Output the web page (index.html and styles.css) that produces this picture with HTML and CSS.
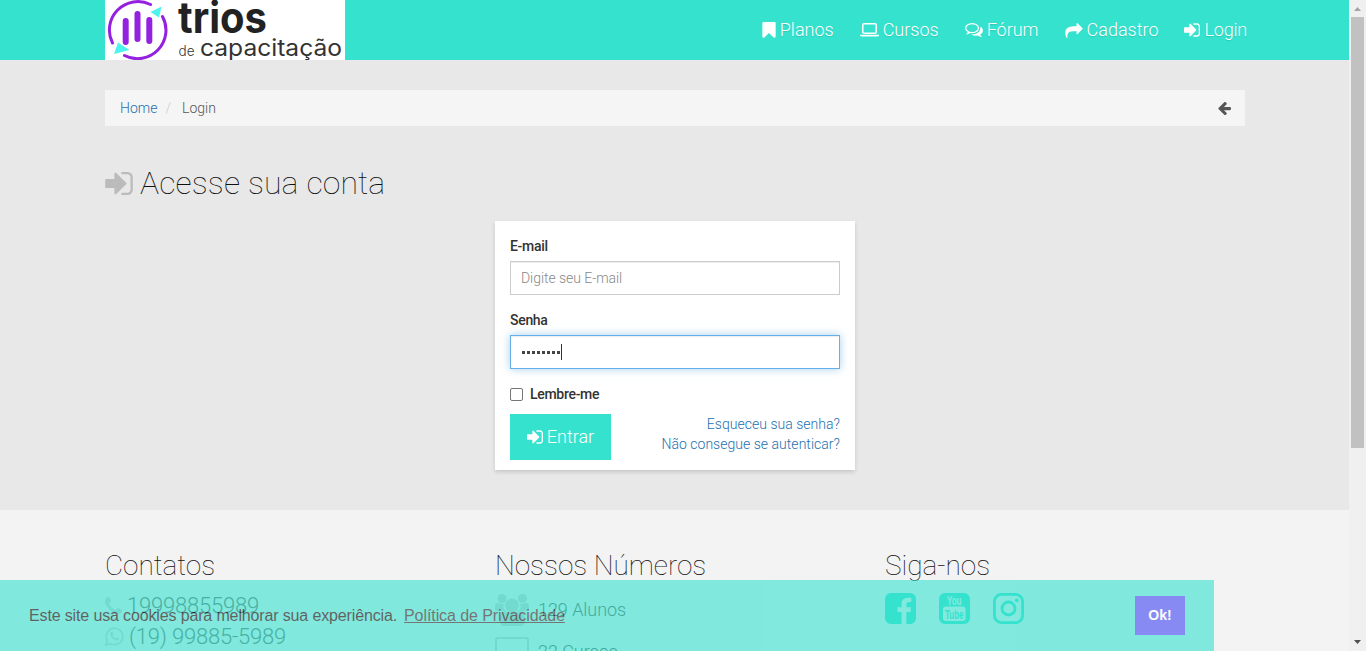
FILE: index.html
```html
<!DOCTYPE html>
<html lang="pt-BR">
<head>
<meta charset="utf-8">
<title>Login</title>
<link rel="stylesheet" href="styles.css">
</head>
<body>
<svg width="0" height="0" class="sprite">
  <symbol id="sign-in" viewBox="128 256 1536 1280"><path d="M1312 896q0 26-19 45l-544 544q-19 19-45 19t-45-19-19-45v-288h-448q-26 0-45-19t-19-45v-384q0-26 19-45t45-19h448v-288q0-26 19-45t45-19 45 19l544 544q19 19 19 45zm352-352v704q0 119-84.500 203.500t-203.500 84.500h-320q-13 0-22.500-9.500t-9.500-22.500q0-4-1-20t-.5-26.500 3-23.500 10-19.500 20.500-6.500h320q66 0 113-47t47-113v-704q0-66-47-113t-113-47h-312l-11.500-1-11.500-3-8-5.500-7-9-2-13.500q0-4-1-20t-.5-26.500 3-23.500 10-19.500 20.500-6.500h320q119 0 203.500 84.500t84.500 203.500z"/></symbol>
</svg>
<div class="window">
  <div class="page">
    <header class="topbar">
      <div class="container topbar-row">
        <svg class="logo" width="240" height="60" viewBox="0 0 240 60">
          <rect width="240" height="60" fill="#fff"/>
          <g fill="none" stroke="#9420e0" stroke-width="3" stroke-linecap="round">
            <path d="M7.500 43A28.500 28.500 0 0 1 45.500 4.500"/>
            <path d="M57.500 16.500A28.500 28.500 0 0 1 19.500 55.500"/>
          </g>
          <g stroke="#9420e0" stroke-width="6" stroke-linecap="round"><path d="M20.700 21V42M32.500 14V39M44.300 20V41"/></g>
          <path fill="#4df3ec" d="M45.500 12L56.500 6.500L54 17.500ZM13 42.500L24.500 50L9 54Z"/>
          <text class="logo-name" x="73" y="33" textLength="89" lengthAdjust="spacingAndGlyphs">trios</text>
          <text class="logo-de" x="73.500" y="55.500" textLength="16" lengthAdjust="spacingAndGlyphs">de</text>
          <text class="logo-sub" x="95" y="55.500" textLength="142" lengthAdjust="spacingAndGlyphs">capacitação</text>
        </svg>
        <nav class="nav">
          <a><svg width="14" height="16" viewBox="256 128 1280 1536"><path d="M1420 128q23 0 44 9 33 13 52.500 41t19.500 62v1289q0 34-19.500 62t-52.500 41q-19 8-44 8-48 0-83-32l-441-424-441 424q-36 33-83 33-23 0-44-9-33-13-52.500-41t-19.500-62v-1289q0-34 19.500-62t52.500-41q21-9 44-9h1048z"/></svg><span>Planos</span></a>
          <a><svg width="19" height="14" viewBox="0 0 19 14"><path fill-rule="evenodd" d="M4 0H15Q17 0 17 2V9Q17 11 15 11H4Q2 11 2 9V2Q2 0 4 0ZM3.500 1.500V9.500H15.500V1.500ZM0 11.700H19V12.500Q19 13.500 17 13.500H2Q0 13.500 0 12.500Z"/></svg><span>Cursos</span></a>
          <a><svg width="18" height="14" viewBox="0 256 1792 1408"><path d="M704 384q-153 0-286 52t-211.500 141-78.500 191q0 82 53 158t149 132l97 56-35 84q34-20 62-39l44-31 53 10q78 14 153 14 153 0 286-52t211.500-141 78.500-191-78.500-191-211.500-141-286-52zm0-128q191 0 353.500 68.500t256.500 186.500 94 257-94 257-256.500 186.500-353.500 68.500q-86 0-176-16-124 88-278 128-36 9-86 16h-3q-11 0-20.500-8t-11.500-21q-1-3-1-6.500t.5-6.500 2-6l2.500-5 3.500-5.500 4-5 4.500-5 4-4.500q5-6 23-25t26-29.500 22.500-29 25-38.500 20.500-44q-124-72-195-177t-71-224q0-139 94-257t256.500-186.500 353.500-68.500zm822 1169q10 24 20.500 44t25 38.500 22.500 29 26 29.500 23 25q1 1 4 4.500t4.500 5 4 5 3.500 5.500l2.500 5 2 6 .5 6.500-1 6.500q-3 14-13 22t-22 7q-50-7-86-16-154-40-278-128-90 16-176 16-271 0-472-132 58 4 88 4 161 0 309-45t264-129q125-92 192-212t67-254q0-77-23-152 129 71 204 178t75 230q0 120-71 224.500t-195 176.500z"/></svg><span>Fórum</span></a>
          <a><svg width="18" height="15" viewBox="0 64 1792 1536"><path d="M1792 640q0 26-19 45l-512 512q-19 19-45 19t-45-19-19-45v-256h-224q-98 0-175.500 6t-154 21.500-133 42.500-105.500 69.500-80 101-48.500 138.500-17.500 181q0 55 5 123 0 6 2.500 23.500t2.500 26.500q0 15-8.500 25t-23.500 10q-16 0-28-17-7-9-13-22t-13.500-30-10.500-24q-127-285-127-451 0-199 53-333 162-403 875-403h224v-256q0-26 19-45t45-19 45 19l512 512q19 19 19 45z"/></svg><span>Cadastro</span></a>
          <a><svg width="16" height="14"><use href="#sign-in"/></svg><span>Login</span></a>
        </nav>
      </div>
    </header>
    <main class="container main">
      <div class="breadcrumb">
        <div><a class="link">Home</a><span class="sep">/</span><span>Login</span></div>
        <svg width="13" height="13" viewBox="150 190 1514 1530"><path d="M1664 896v128q0 53-32.500 90.500t-84.500 37.500h-704l293 294q38 36 38 90t-38 90l-75 76q-37 37-90 37-52 0-91-37l-651-652q-37-37-37-90 0-52 37-91l651-650q38-38 91-38 52 0 90 38l75 74q38 38 38 91t-38 91l-293 293h704q52 0 84.500 37.500t32.500 90.500z"/></svg>
      </div>
      <h1><svg width="28" height="23"><use href="#sign-in"/></svg><span>Acesse sua conta</span></h1>
      <form class="card">
        <label class="lbl">E-mail</label>
        <div class="field placeholder">Digite seu E-mail</div>
        <label class="lbl second">Senha</label>
        <div class="field focus"><span class="dots"><i></i><i></i><i></i><i></i><i></i><i></i><i></i><i></i></span><span class="caret"></span></div>
        <div class="remember"><span class="box"></span><label class="lbl">Lembre-me</label></div>
        <div class="actions">
          <div class="enter"><svg width="16" height="14"><use href="#sign-in"/></svg><span>Entrar</span></div>
          <div class="help"><a class="link">Esqueceu sua senha?</a><a class="link">Não consegue se autenticar?</a></div>
        </div>
      </form>
    </main>
    <footer class="footer">
      <div class="container cols">
        <section>
          <h2>Contatos</h2>
          <div class="phone"><svg width="17" height="17" viewBox="192 128 1408 1408"><path d="M1600 1240q0 27-10 70.500t-21 68.500q-21 50-122 106-94 51-186 51-27 0-52.500-3.500t-57.500-12.500-47.500-14.500-55.500-20.500-49-18q-98-35-175-83-128-79-264.500-215.500t-215.500-264.500q-48-77-83-175-3-9-18-49t-20.500-55.500-14.500-47.500-12.500-57.500-3.500-52.500q0-92 51-186 56-101 106-122 25-11 68.500-21t70.500-10q14 0 21 3 18 6 53 76 11 19 30 54t35 63.500 31 53.500q3 4 17.500 25t21.500 35.500 7 28.500q0 20-28.500 50t-62 55-62 53-28.500 46q0 9 5 22.500t8.500 20.500 14 24 11.500 19q76 137 174 235t235 174q2 1 19 11.500t24 14 20.500 8.500 22.500 5q18 0 46-28.500t53-62 55-62 50-28.500q14 0 28.500 7t35.500 21.500 25 17.500q25 15 53.500 31t63.500 35 54 30q70 35 76 53 3 7 3 21z"/></svg><span>19998855989</span></div>
          <div class="phone"><svg width="19" height="19" viewBox="0 0 19 19"><path d="M1 18L2.300 13.300A8.200 8.200 0 1 1 5.700 16.700Z" fill="none" stroke="currentColor" stroke-width="1.700"/><path d="M6.500 5Q5 5.300 5 7Q6 12 12 13.700Q14 13.500 14 11.500L11.500 10.300L10.300 11.500Q8.500 10.800 7.600 9L8.300 7.800L7.500 5Z"/></svg><span>(19) 99885-5989</span></div>
        </section>
        <section>
          <h2>Nossos Números</h2>
          <div class="stat"><svg width="34" height="32" viewBox="0 0 34 32"><circle cx="7" cy="4.500" r="4.500"/><circle cx="27.500" cy="4.500" r="4.500"/><circle cx="17" cy="11.500" r="7"/><path d="M0 16V13Q0 9 3 9L9 10Q7 15 11 17H3Q0 17 0 16ZM34 16V13Q34 9 31 9L25 10Q27 15 23 17H31Q34 17 34 16ZM5 27Q5 17 10 17Q17 21 24 17Q30 17 30 27Q30 32 25 32H9Q5 32 5 27Z"/></svg><span>129 Alunos</span></div>
          <div class="stat"><svg width="34" height="30" viewBox="0 0 34 30"><rect x="1" y="1" width="32" height="24" rx="1" fill="none" stroke="currentColor" stroke-width="2"/><path d="M0 27H34V30H0Z"/></svg><span>22 Cursos</span></div>
        </section>
        <section>
          <h2>Siga-nos</h2>
          <div class="social">
            <svg width="31" height="31" viewBox="128 128 1536 1536"><path d="M1376 128q119 0 203.500 84.500t84.500 203.500v960q0 119-84.500 203.500t-203.500 84.500h-188v-595h199l30-232h-229v-148q0-56 23.500-84t91.500-28l122-1v-207q-63-9-178-9-136 0-217.500 80t-81.500 226v171h-200v232h200v595h-532q-119 0-203.500-84.500t-84.500-203.500v-960q0-119 84.500-203.500t203.500-84.500h960z"/></svg>
            <svg width="31" height="31" viewBox="0 0 31 31"><rect width="31" height="31" rx="6"/><rect x="4" y="13.500" width="22.500" height="14.500" rx="3" fill="#f3f3f3"/><text x="8" y="12" textLength="14.500" lengthAdjust="spacingAndGlyphs" class="yt yt-you">You</text><text x="6" y="25.500" textLength="18.500" lengthAdjust="spacingAndGlyphs" class="yt">Tube</text></svg>
            <svg width="31" height="31" viewBox="0 0 31 31"><rect x="1.400" y="1.400" width="28.200" height="28.200" rx="7" fill="none" stroke="#35e2ce" stroke-width="2.800"/><circle cx="15.500" cy="15.500" r="6.500" fill="none" stroke="#35e2ce" stroke-width="2.800"/><circle cx="23.700" cy="7.300" r="1.900"/></svg>
          </div>
        </section>
      </div>
    </footer>
    <div class="cookie">
      <div class="cookie-text"><span class="msg">Este site usa cookies para melhorar sua experiência.</span><a>Política de Privacidade</a></div>
      <div class="ok">Ok!</div>
    </div>
  </div>
  <div class="scrollbar">
    <svg width="17" height="17" viewBox="0 0 17 17"><path fill="#a3a3a3" d="M5 11L8.500 7L12 11Z"/></svg>
    <div class="thumb"></div>
    <svg class="down" width="17" height="17" viewBox="0 0 17 17"><path fill="#505050" d="M5 6L8.500 10L12 6Z"/></svg>
  </div>
</div>
</body>
</html>
```
FILE: styles.css
```css
* { box-sizing: border-box; }
body { margin: 0; font: 300 14px/20px Roboto, sans-serif; color: #333; background: #e8e8e8; }
svg { display: block; flex: none; fill: currentColor; }
.sprite { position: absolute; }
.window { display: flex; width: 1366px; height: 651px; overflow: hidden; }
.page { position: relative; width: 1349px; height: 651px; overflow: hidden; }
.container { width: 1140px; margin-left: 105px; }
.topbar { height: 60px; background: #35e2ce; }
.topbar-row { display: flex; justify-content: space-between; }
.logo-name { font: 700 43px Inter, sans-serif; fill: #222; }
.logo-de { font: 300 14px Inter, sans-serif; fill: #333; }
.logo-sub { font: 400 23.500px Inter, sans-serif; fill: #333; }
.nav { display: flex; gap: 26px; height: 60px; align-items: center; margin-right: -2px; color: #fff; font-size: 18px; }
.nav a { display: flex; align-items: center; gap: 4px; text-shadow: 0 1px 1px rgba(0,0,0,.12); }
.nav a:last-child { letter-spacing: -.2px; }
.link { color: #2470b0; }
.breadcrumb { display: flex; justify-content: space-between; align-items: center; height: 36px; margin-top: 30px; padding: 0 14px 0 15px; background: #f5f5f5; color: #555; }
.sep { color: #ccc; padding: 0 11px 0 8px; }
h1 { display: flex; align-items: center; gap: 7px; height: 40px; margin: 37px 0 0; font-size: 32px; font-weight: 100; letter-spacing: .12px; line-height: 40px; color: #111; }
h1 svg { color: #bbb; }
.card { width: 360px; height: 249px; margin: 18px 0 0 390px; padding: 15px; background: #fff; box-shadow: 0 2px 4px rgba(0,0,0,.15); }
.lbl { display: block; height: 20px; font-weight: 500; letter-spacing: -.3px; }
.second { margin-top: 15px; }
.field { display: flex; align-items: center; height: 34px; margin-top: 5px; padding: 0 10px; border: 1px solid #ccc; background: #fff; box-shadow: inset 0 1px 1px rgba(0,0,0,.075); }
.placeholder { color: #888; letter-spacing: -.05px; }
.focus { border-color: #66afe9; box-shadow: inset 0 1px 1px rgba(0,0,0,.075), 0 0 8px rgba(102,175,233,.6); }
.dots { display: flex; gap: 2px; padding-left: 1px; }
.dots i { width: 3px; height: 3px; background: #444; }
.caret { width: 1px; height: 16px; background: #333; margin-left: 1px; }
.remember { display: flex; gap: 7px; align-items: center; height: 20px; margin-top: 15px; }
.box { width: 13px; height: 13px; border: 1px solid #767676; border-radius: 2px; }
.actions { display: flex; justify-content: space-between; margin-top: 10px; }
.enter { display: flex; align-items: center; justify-content: center; gap: 4px; width: 101px; height: 46px; background: #35e2ce; color: #fff; font-size: 18px; }
.help { display: flex; flex-direction: column; text-align: right; letter-spacing: .03px; }
.footer { height: 200px; margin-top: 40px; padding-top: 39px; background: #f3f3f3; }
.cols { display: grid; grid-template-columns: 390px 390px 360px; }
h2 { margin: 0; font-size: 28px; font-weight: 100; line-height: 34px; letter-spacing: -.05px; color: #111; }
.phone { display: flex; align-items: center; gap: 5px; height: 31px; font-size: 22px; letter-spacing: -.2px; color: #666; }
h2 + .phone { margin-top: 7px; }
.phone svg, .stat svg { color: #d0d0d0; }
.stat { display: flex; align-items: center; gap: 9px; height: 42px; font-size: 18px; color: #555; letter-spacing: -.05px; }
h2 + .stat { margin-top: 6px; }
.social { display: flex; gap: 23px; margin-top: 10px; color: #35e2ce; }
.yt { font: bold 12px "Liberation Sans", sans-serif; fill: #35e2ce; }
.yt-you { fill: #f3f3f3; }
.cookie { position: absolute; left: 0; top: 580px; width: 1214px; height: 71px; padding: 0 29px; display: flex; align-items: center; justify-content: space-between; background: #35e2ce; opacity: .6; color: #000; font: 16px/24px "Liberation Sans", sans-serif; }
.cookie-text { display: flex; gap: 7px; letter-spacing: -.14px; }
.cookie a { text-decoration: underline; color: #222; letter-spacing: -.08px; }
.ok { width: 50px; height: 39px; line-height: 39px; background: #4245f5; color: #fff; text-align: center; font-weight: 700; font-size: 14px; }
.scrollbar { width: 17px; height: 651px; background: #f0f0f0; display: flex; flex-direction: column; }
.thumb { width: 13px; height: 431px; margin-left: 2px; background: #c1c1c1; }
.down { margin-top: auto; }
```
